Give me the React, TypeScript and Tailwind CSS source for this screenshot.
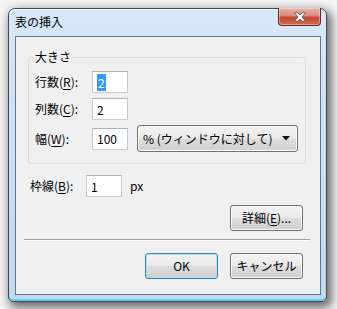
import React from "react";

const font = "font-['Noto_Sans_CJK_JP','Noto_Sans',sans-serif]";

const Key = ({ k }: { k: string }) => (
  <span className="underline underline-offset-[2px] decoration-[1px]">{k}</span>
);

const TextBox = ({ value, selected }: { value: string; selected?: boolean }) => (
  <div className="flex h-[22px] w-[36px] items-center border border-[#c5ccd4] border-t-[#abb2ba] bg-white pl-[4px]">
    {selected ? (
      <span className="bg-[#3399ff] px-[1px] leading-[17px] text-white">{value}</span>
    ) : (
      <span className="leading-[17px]">{value}</span>
    )}
  </div>
);

const btn =
  "flex items-center justify-center rounded-[3px] border bg-[linear-gradient(180deg,#f2f2f2_0%,#ebebeb_48%,#dddddd_52%,#cfcfcf_100%)]";

const App = () => {
  return (
    <div className={`h-[309px] w-[337px] overflow-hidden bg-[#f4f4f4] pl-[8px] pt-[8px] text-[12px] leading-[16px] text-black ${font}`}>
      {/* window frame */}
      <div className="flex h-[294px] w-[319px] flex-col rounded-t-[7px] rounded-b-[5px] border border-[#3d4857] bg-[linear-gradient(180deg,#d9e8f8_0%,#cde0f4_40%,#c3d9f0_100%)] shadow-[3px_4px_10px_2px_rgba(0,0,0,0.55),inset_0_-2px_0_#62d0f6,inset_0_1px_0_#f4f9ff]">
        {/* title bar */}
        <div className="flex h-[27px] items-start">
          <div className="ml-[6px] mt-[5px] leading-[16px]">表の挿入</div>
          <div className="ml-auto mr-[5px] -mt-[1px] flex h-[18px] w-[43px] items-center justify-center rounded-b-[4px] border border-t-0 border-[#6a2a22] bg-[linear-gradient(180deg,#e9b3aa_0%,#d98a7e_45%,#c5442f_55%,#d26a55_100%)] shadow-[inset_0_0_0_1px_rgba(255,255,255,0.35)]">
            <svg width="14" height="10" viewBox="0 0 14 10">
              <path
                d="M1.5 0.8 L5 0.8 L7 3 L9 0.8 L12.5 0.8 L9 5 L12.5 9.2 L9 9.2 L7 7 L5 9.2 L1.5 9.2 L5 5 Z"
                fill="#ffffff"
                stroke="#5b5b5b"
                strokeWidth="0.9"
                strokeLinejoin="round"
              />
            </svg>
          </div>
        </div>

        {/* client area */}
        <div className="mb-[6px] ml-[6px] mr-[5px] flex flex-1 flex-col border border-[#65758a] bg-[#f0f0f0]">
          <fieldset className="ml-[12px] mt-[12px] w-[278px] rounded-[3px] border border-[#d5dfe5] px-[6px] pb-[11px]">
            <legend className="-ml-[1px] px-[1px] leading-[16px]">大きさ</legend>
            <div className="mt-[6px] flex h-[22px] items-center">
              <div className="w-[57px]">
                行数(<Key k="R" />):
              </div>
              <TextBox value="2" selected />
            </div>
            <div className="mt-[5px] flex h-[22px] items-center">
              <div className="w-[57px]">
                列数(<Key k="C" />):
              </div>
              <TextBox value="2" />
            </div>
            <div className="mt-[5px] flex h-[27px] items-center">
              <div className="w-[57px]">
                幅(<Key k="W" />):
              </div>
              <TextBox value="100" />
              <div className={`${btn} ml-[9px] h-[27px] w-[161px] justify-start border-[#707070] pl-[5px] shadow-[inset_0_0_0_1px_#fbfbfb]`}>
                <span>% (ウィンドウに対して)</span>
                <svg className="ml-auto mr-[7px]" width="8" height="5" viewBox="0 0 8 5">
                  <path d="M0 0 H8 L4 4.5 Z" fill="#111111" />
                </svg>
              </div>
            </div>
          </fieldset>

          <div className="ml-[14px] mt-[11px] flex h-[22px] items-center">
            <div className="w-[56px]">
              枠線(<Key k="B" />):
            </div>
            <TextBox value="1" />
            <div className="ml-[8px]">px</div>
          </div>

          <div className="mr-[17px] mt-[8px] flex justify-end">
            <div className={`${btn} h-[26px] w-[73px] border-[#707070] shadow-[inset_0_0_0_1px_#fbfbfb]`}>
              詳細(<Key k="E" />)...
            </div>
          </div>

          <div className="ml-[8px] mr-[10px] mt-[8px] h-[2px] border-t border-[#a0a0a0] border-b-white border-b" />

          <div className="mr-[17px] mt-[12px] flex justify-end gap-[12px]">
            <div className={`${btn} h-[26px] w-[73px] border-[#3c7fb1] shadow-[inset_0_0_0_1px_#aee6f8]`}>OK</div>
            <div className={`${btn} h-[26px] w-[73px] border-[#707070] shadow-[inset_0_0_0_1px_#fbfbfb]`}>キャンセル</div>
          </div>
        </div>
      </div>
    </div>
  );
};

export default App;
